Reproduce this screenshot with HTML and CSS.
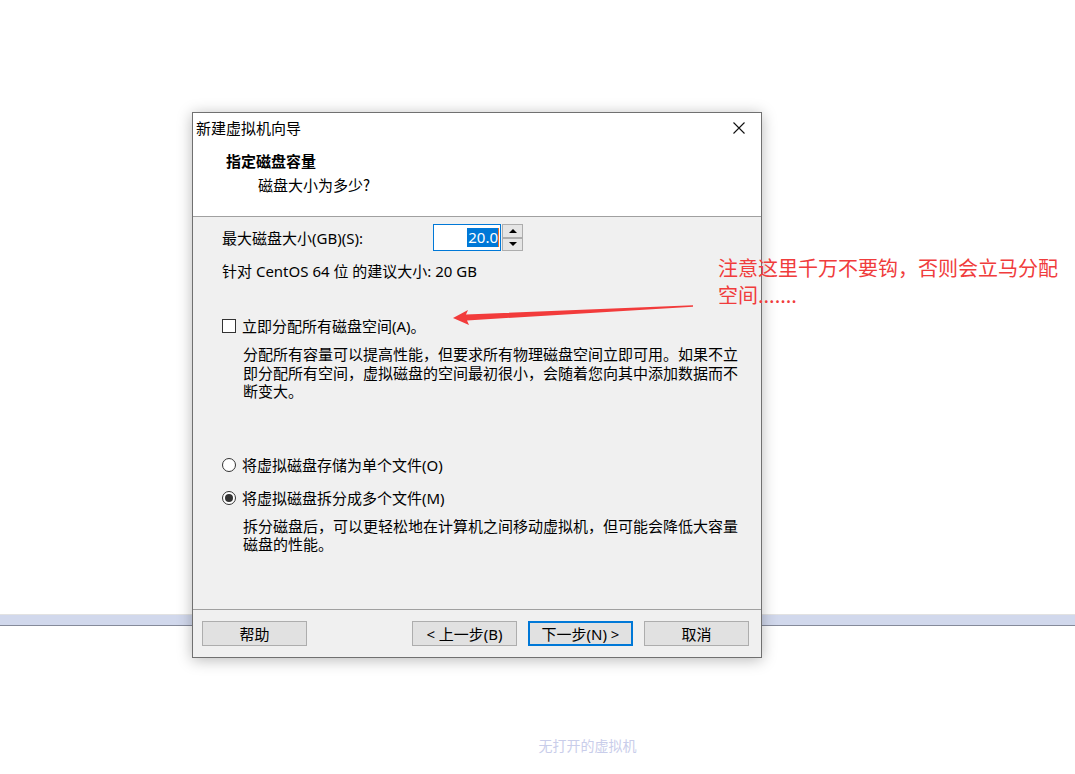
FILE: index.html
```html
<!DOCTYPE html>
<html lang="zh-CN">
<head>
<meta charset="utf-8">
<title>新建虚拟机向导</title>
<link rel="stylesheet" href="styles.css">
</head>
<body>
<div class="desktop">
  <div class="app">
    <div class="app-bar"></div>
    <div class="empty">无打开的虚拟机</div>
  </div>

  <div class="dialog">
    <div class="titlebar">
      <span class="title">新建虚拟机向导</span>
      <svg class="close" width="12" height="12" viewBox="0 0 12 12"><path d="M0.5 0.5 L11.5 11.5 M11.5 0.5 L0.5 11.5" stroke="#111" stroke-width="1.1" fill="none"/></svg>
    </div>
    <div class="header">
      <div class="h-title">指定磁盘容量</div>
      <div class="h-sub">磁盘大小为多少?</div>
    </div>
    <div class="body">
      <div class="size-row">
        <span class="size-label">最大磁盘大小(GB)(S):</span>
        <div class="spin">
          <div class="spin-input"><span class="sel">20.0</span><span class="caret"></span></div>
          <div class="spin-btns">
            <div class="spin-btn"><span class="tri-up"></span></div>
            <div class="spin-btn"><span class="tri-down"></span></div>
          </div>
        </div>
      </div>
      <div class="recommend">针对 CentOS 64 位 的建议大小: 20 GB</div>
      <div class="option check-row"><span class="checkbox"></span><span>立即分配所有磁盘空间(A)。</span></div>
      <div class="desc">
        <div class="line">分配所有容量可以提高性能，但要求所有物理磁盘空间立即可用。如果不立</div>
        <div class="line">即分配所有空间，虚拟磁盘的空间最初很小，会随着您向其中添加数据而不</div>
        <div class="line">断变大。</div>
      </div>
      <div class="option radio-row first"><span class="radio"></span><span>将虚拟磁盘存储为单个文件(O)</span></div>
      <div class="option radio-row second"><span class="radio checked"></span><span>将虚拟磁盘拆分成多个文件(M)</span></div>
      <div class="desc">
        <div class="line">拆分磁盘后，可以更轻松地在计算机之间移动虚拟机，但可能会降低大容量</div>
        <div class="line">磁盘的性能。</div>
      </div>
    </div>
    <div class="footer">
      <button class="btn">帮助</button>
      <div class="spacer"></div>
      <button class="btn">&lt; 上一步(B)</button>
      <button class="btn primary">下一步(N) &gt;</button>
      <button class="btn">取消</button>
    </div>
  </div>

  <div class="note">注意这里千万不要钩，否则会立马分配<br>空间.......</div>
  <svg class="arrow" width="260" height="40" viewBox="0 0 260 40">
    <polygon points="13,23 28,15 26,19.5 253,10.3 253,11.7 27,25.5 29,30" fill="#f23b3b"/>
  </svg>
</div>
</body>
</html>
```

FILE: styles.css
```css
* { box-sizing: border-box; }

html, body {
  margin: 0;
  padding: 0;
  background: #ffffff;
}

body {
  font-family: "Noto Sans", "Noto Sans CJK SC", sans-serif;
  font-size: 15px;
  color: #000;
}

.desktop {
  position: relative;
  width: 1075px;
  height: 774px;
  overflow: hidden;
}

/* background application */
.app {
  display: flex;
  flex-direction: column;
}

.app-bar {
  margin-top: 614px;
  height: 12px;
  border-top: 1px solid #e2e2e2;
  border-bottom: 1px solid #858a9a;
  background: #d1d8ec;
}

.empty {
  margin-top: 109px;
  padding-left: 100px;
  text-align: center;
  font-family: "Noto Sans CJK SC", sans-serif;
  font-size: 14px;
  line-height: 20px;
  color: #c9cdea;
}

/* dialog window */
.dialog {
  position: absolute;
  left: 192px;
  top: 112px;
  width: 570px;
  height: 546px;
  border: 1px solid #707070;
  background: #f0f0f0;
  box-shadow: 0 2px 14px rgba(0, 0, 0, 0.28);
  display: flex;
  flex-direction: column;
  font-family: "Noto Sans", "Noto Sans CJK SC", sans-serif;
}

.titlebar {
  height: 30px;
  background: #fff;
  display: flex;
  align-items: center;
  justify-content: space-between;
  padding: 0 16px 0 3px;
  font-family: "Noto Sans CJK SC", sans-serif;
}

.title {
  font-size: 15px;
  line-height: 20px;
}

.header {
  height: 74px;
  background: #fff;
  border-bottom: 1px solid #a0a0a0;
  padding: 8px 0 0 33px;
  font-family: "Noto Sans CJK SC", sans-serif;
}

.h-title {
  font-weight: bold;
  font-size: 15px;
  line-height: 20px;
}

.h-sub {
  margin-top: 4px;
  padding-left: 32px;
  font-size: 15px;
  line-height: 20px;
}

.body {
  flex: 1;
  padding: 7px 0 0 29px;
  display: flex;
  flex-direction: column;
  align-items: flex-start;
  border-bottom: 1px solid #a0a0a0;
}

.size-row {
  display: flex;
  align-items: center;
  height: 27px;
}

.size-label {
  width: 211px;
  line-height: 20px;
}

.spin {
  display: flex;
  gap: 1px;
}

.spin-input {
  width: 68px;
  height: 27px;
  border: 1px solid #0078d7;
  background: #fff;
  display: flex;
  align-items: center;
  justify-content: flex-end;
  padding-right: 1px;
}

.sel {
  background: #0078d7;
  color: #fff;
  line-height: 19px;
  padding: 0 0 0 1px;
}

.caret {
  width: 1px;
  height: 19px;
  background: #f07020;
}

.spin-btns {
  display: flex;
  flex-direction: column;
}

.spin-btn {
  width: 21px;
  height: 13.5px;
  border: 1px solid #adadad;
  background: #e5e5e5;
  display: flex;
  align-items: center;
  justify-content: center;
}

.tri-up {
  width: 0;
  height: 0;
  border-left: 4px solid transparent;
  border-right: 4px solid transparent;
  border-bottom: 4px solid #000;
}

.tri-down {
  width: 0;
  height: 0;
  border-left: 4px solid transparent;
  border-right: 4px solid transparent;
  border-top: 4px solid #000;
}

.recommend {
  margin-top: 10px;
  line-height: 20px;
}

.option {
  display: flex;
  align-items: center;
  gap: 6px;
  line-height: 20px;
}

.check-row { margin-top: 35px; }

.checkbox {
  width: 14px;
  height: 14px;
  border: 1px solid #333;
  background: #fff;
}

.radio {
  width: 14px;
  height: 14px;
  border: 1px solid #333;
  border-radius: 50%;
  background: #fff;
  display: flex;
  align-items: center;
  justify-content: center;
}

.radio.checked::after {
  content: "";
  width: 8px;
  height: 8px;
  border-radius: 50%;
  background: #333;
}

.radio-row.first { margin-top: 53px; }
.radio-row.second { margin-top: 13px; }

.desc {
  margin: 10px 0 0 21px;
  display: flex;
  flex-direction: column;
  font-family: "Liberation Sans", "Noto Sans CJK SC", sans-serif;
}

.line {
  height: 18.5px;
  line-height: 18.5px;
  white-space: nowrap;
}

.footer {
  height: 47px;
  display: flex;
  align-items: flex-start;
  padding: 11px 12px 0 9px;
  gap: 11px;
}

.spacer { flex: 1; }

.btn {
  width: 105px;
  height: 25px;
  border: 1px solid #adadad;
  background: #e1e1e1;
  font-family: "Noto Sans", "Noto Sans CJK SC", sans-serif;
  font-size: 15px;
  line-height: 20px;
  color: #000;
  padding: 0;
}

.btn.primary {
  border: 2px solid #0078d7;
}

/* annotation */
.note {
  position: absolute;
  left: 718px;
  top: 254px;
  font-family: "Noto Sans CJK SC", sans-serif;
  font-size: 20px;
  line-height: 27px;
  color: #f03c3c;
  white-space: nowrap;
}

.arrow {
  position: absolute;
  left: 440px;
  top: 295px;
}
```
